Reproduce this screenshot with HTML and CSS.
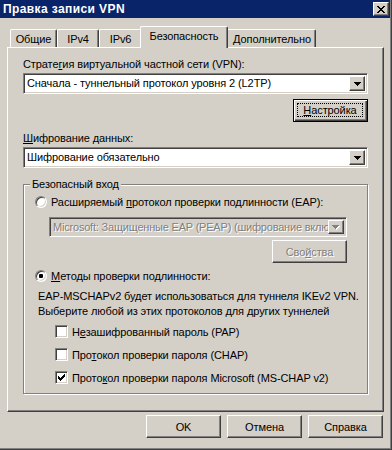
FILE: index.html
```html
<!DOCTYPE html>
<html lang="ru">
<head>
<meta charset="utf-8">
<title>Правка записи VPN</title>
<link rel="stylesheet" href="styles.css">
</head>
<body>
<div class="window">
  <div class="titlebar">
    <span class="title">Правка записи VPN</span>
    <span class="close"><svg width="8" height="7" viewBox="0 0 8 7" shape-rendering="crispEdges"><path d="M0 0h2v1H0zM6 0h2v1H6zM1 1h2v1H1zM5 1h2v1H5zM2 2h4v1H2zM3 3h2v1H3zM2 4h4v1H2zM1 5h2v1H1zM5 5h2v1H5zM0 6h2v1H0zM6 6h2v1H6z" fill="#000"/></svg></span>
  </div>
  <div class="body">
    <div class="tabs">
      <div class="tab w-general">Общие</div>
      <div class="tab w-ipv4">IPv4</div>
      <div class="tab w-ipv6">IPv6</div>
      <div class="tab active">Безопасность</div>
      <div class="tab w-extra">Дополнительно</div>
    </div>
    <div class="panel">
      <div class="label">Страте<u>г</u>ия виртуальной частной сети (VPN):</div>
      <div class="combo">
        <span class="combo-text">Сначала - туннельный протокол уровня 2 (L2TP)</span>
        <span class="arrow"><svg width="7" height="4" viewBox="0 0 7 4" shape-rendering="crispEdges"><path d="M0 0h7v1H0zM1 1h5v1H1zM2 2h3v1H2zM3 3h1v1H3z" fill="#000"/></svg></span>
      </div>
      <div class="right-row settings-row">
        <div class="btn default"><span class="focus"><u>Н</u>астройка</span></div>
      </div>
      <div class="label label-gap"><u>Ш</u>ифрование данных:</div>
      <div class="combo">
        <span class="combo-text">Шифрование обязательно</span>
        <span class="arrow"><svg width="7" height="4" viewBox="0 0 7 4" shape-rendering="crispEdges"><path d="M0 0h7v1H0zM1 1h5v1H1zM2 2h3v1H2zM3 3h1v1H3z" fill="#000"/></svg></span>
      </div>
      <div class="group">
        <div class="group-title">Безопасный вход</div>
        <div class="opt opt-eap">
          <span class="radio"></span>
          <span>Расширяемый <u>п</u>ротокол проверки подлинности (EAP):</span>
        </div>
        <div class="combo disabled eap-combo">
          <span class="combo-text">Microsoft: Защищенные EAP (PEAP) (шифрование вклю</span>
          <span class="arrow"><svg width="8" height="5" viewBox="0 0 8 5" shape-rendering="crispEdges"><path d="M1 1h7v1H1zM2 2h5v1H2zM3 3h3v1H3zM4 4h1v1H4z" fill="#fff"/><path d="M0 0h7v1H0zM1 1h5v1H1zM2 2h3v1H2zM3 3h1v1H3z" fill="#808080"/></svg></span>
        </div>
        <div class="right-row props-row">
          <div class="btn disabled-text">Сво<u>й</u>ства</div>
        </div>
        <div class="opt opt-methods">
          <span class="radio checked"></span>
          <span><u>М</u>етоды проверки подлинности:</span>
        </div>
        <div class="desc">EAP-MSCHAPv2 будет использоваться для туннеля IKEv2 VPN.<br>Выберите любой из этих протоколов для других туннелей</div>
        <div class="checks">
          <div class="check-row"><span class="checkbox"></span><span>Н<u>е</u>зашифрованный пароль (PAP)</span></div>
          <div class="check-row"><span class="checkbox"></span><span>Про<u>т</u>окол проверки пароля (CHAP)</span></div>
          <div class="check-row"><span class="checkbox"><svg width="7" height="7" viewBox="0 0 7 7" shape-rendering="crispEdges"><path d="M6 0h1v1H6zM5 1h2v1H5zM0 2h1v1H0zM4 2h3v1H4zM0 3h2v1H0zM3 3h3v1H3zM0 4h5v1H0zM1 5h3v1H1zM2 6h1v1H2z" fill="#000"/></svg></span><span>Прото<u>к</u>ол проверки пароля Microsoft (MS-CHAP v2)</span></div>
        </div>
      </div>
    </div>
    <div class="footer">
      <div class="btn">OK</div>
      <div class="btn">Отмена</div>
      <div class="btn">Справка</div>
    </div>
  </div>
</div>
</body>
</html>
```
FILE: styles.css
```css
html, body {
  margin: 0;
  padding: 0;
}
body {
  background: #d4d0c8;
  font-family: "Liberation Sans", Arial, sans-serif;
  font-size: 11px;
  letter-spacing: -0.1px;
  color: #000;
}
u {
  text-decoration: underline;
  text-underline-offset: 1px;
}
.window {
  width: 392px;
  height: 450px;
  box-sizing: border-box;
  border-right: 1px solid #404040;
  border-bottom: 1px solid #404040;
  box-shadow: inset -1px -1px #808080;
  overflow: hidden;
}
.titlebar {
  height: 18px;
  background: #0a246a;
  display: flex;
  align-items: center;
  justify-content: space-between;
  padding: 0 1px 0 3px;
  margin-right: 1px;
}
.title {
  color: #fff;
  font-weight: bold;
  font-size: 12px;
  letter-spacing: 0.4px;
  line-height: 14px;
}
.close {
  width: 16px;
  height: 14px;
  box-sizing: border-box;
  background: #d4d0c8;
  border: 1px solid;
  border-color: #fff #404040 #404040 #fff;
  box-shadow: inset -1px -1px #808080;
  display: flex;
  align-items: center;
  justify-content: center;
}
.close svg, .arrow svg, .checkbox svg {
  display: block;
}
.body {
  padding: 8px 8px 0 7px;
}
.tabs {
  display: flex;
  align-items: flex-end;
  height: 21px;
  padding-left: 3px;
}
.tab {
  height: 18px;
  box-sizing: border-box;
  flex-shrink: 0;
  border-top: 1px solid #fff;
  border-left: 1px solid #fff;
  border-right: 1px solid #404040;
  box-shadow: inset -1px 0 #808080;
  border-radius: 2px 2px 0 0;
  display: flex;
  align-items: center;
  justify-content: center;
  line-height: 14px;
  background: #d4d0c8;
}
.w-general { width: 47px; }
.w-ipv4 { width: 42px; }
.w-ipv6 { width: 43px; }
.w-extra { width: 90px; padding-left: 2px; }
.tab.active {
  width: 88px;
  height: 22px;
  margin: 0 -2px -1px;
  position: relative;
  z-index: 1;
  padding-bottom: 3px;
}
.panel {
  width: 377px;
  height: 365px;
  box-sizing: border-box;
  border: 1px solid;
  border-color: #fff #404040 #404040 #fff;
  box-shadow: inset -1px -1px #808080;
  padding: 9px 15px 0 15px;
}
.label {
  line-height: 14px;
}
.label-gap {
  margin-top: 9px;
}
.combo {
  margin-top: 2px;
  height: 21px;
  box-sizing: border-box;
  display: flex;
  align-items: stretch;
  background: #fff;
  border: 1px solid;
  border-color: #808080 #fff #fff #808080;
  box-shadow: inset 1px 1px #404040, inset -1px -1px #d4d0c8;
  padding: 2px;
}
.combo-text {
  flex: 1;
  min-width: 0;
  white-space: nowrap;
  overflow: hidden;
  padding-left: 1px;
  line-height: 15px;
}
.arrow {
  width: 16px;
  flex-shrink: 0;
  box-sizing: border-box;
  background: #d4d0c8;
  border: 1px solid;
  border-color: #fff #404040 #404040 #fff;
  box-shadow: inset -1px -1px #808080;
  display: flex;
  align-items: center;
  justify-content: center;
}
.right-row {
  display: flex;
  justify-content: flex-end;
}
.settings-row {
  margin-top: 5px;
}
.btn {
  width: 75px;
  height: 23px;
  box-sizing: border-box;
  background: #d4d0c8;
  border: 1px solid;
  border-color: #fff #404040 #404040 #fff;
  box-shadow: inset -1px -1px #808080;
  display: flex;
  align-items: center;
  justify-content: center;
  line-height: 14px;
}
.btn.default {
  border: 1px solid #000;
  box-shadow: inset 1px 1px #fff, inset -1px -1px #404040, inset -2px -2px #808080;
  padding: 3px 4px 4px 3px;
  align-items: stretch;
}
.focus {
  flex: 1;
  border: 1px dotted #000;
  display: flex;
  align-items: center;
  justify-content: center;
}
.disabled-text, .disabled .combo-text {
  color: #808080;
  text-shadow: 1px 1px #fff;
}
.group {
  margin-top: 16px;
  height: 210px;
  box-sizing: border-box;
  border: 1px solid #808080;
  box-shadow: inset 1px 1px #fff, 1px 1px #fff;
}
.group-title {
  display: table;
  margin: -8px 0 0 6px;
  padding: 0 2px;
  background: #d4d0c8;
  line-height: 14px;
}
.opt {
  display: flex;
  align-items: center;
  height: 14px;
  margin-left: 11px;
  gap: 4px;
}
.opt-eap {
  margin-top: 4px;
}
.opt-methods {
  margin-top: 6px;
}
.radio {
  width: 12px;
  height: 12px;
  box-sizing: border-box;
  border-radius: 50%;
  border: 1px solid;
  border-color: #808080 #fff #fff #808080;
  box-shadow: inset 1px 1px #404040, inset -1px -1px #d4d0c8;
  background: #fff;
  display: flex;
  align-items: center;
  justify-content: center;
  flex-shrink: 0;
}
.radio.checked::after {
  content: "";
  width: 4px;
  height: 4px;
  border-radius: 1px;
  background: #000;
}
.combo.disabled {
  background: #d4d0c8;
}
.eap-combo {
  margin: 8px 20px 0 25px;
  height: 20px;
}
.eap-combo .combo-text {
  line-height: 14px;
  letter-spacing: -0.2px;
}
.props-row {
  margin: 3px 20px 0 0;
}
.desc {
  margin: 6px 0 0 14px;
  line-height: 15px;
}
.checks {
  margin: 6px 0 0 31px;
  display: flex;
  flex-direction: column;
  gap: 10px;
}
.check-row {
  display: flex;
  align-items: center;
  height: 13px;
  gap: 4px;
}
.checkbox {
  width: 13px;
  height: 13px;
  box-sizing: border-box;
  background: #fff;
  border: 1px solid;
  border-color: #808080 #fff #fff #808080;
  box-shadow: inset 1px 1px #404040, inset -1px -1px #d4d0c8;
  display: flex;
  align-items: center;
  justify-content: center;
  flex-shrink: 0;
}
.footer {
  display: flex;
  justify-content: flex-end;
  gap: 6px;
  margin-top: 3px;
}
```
